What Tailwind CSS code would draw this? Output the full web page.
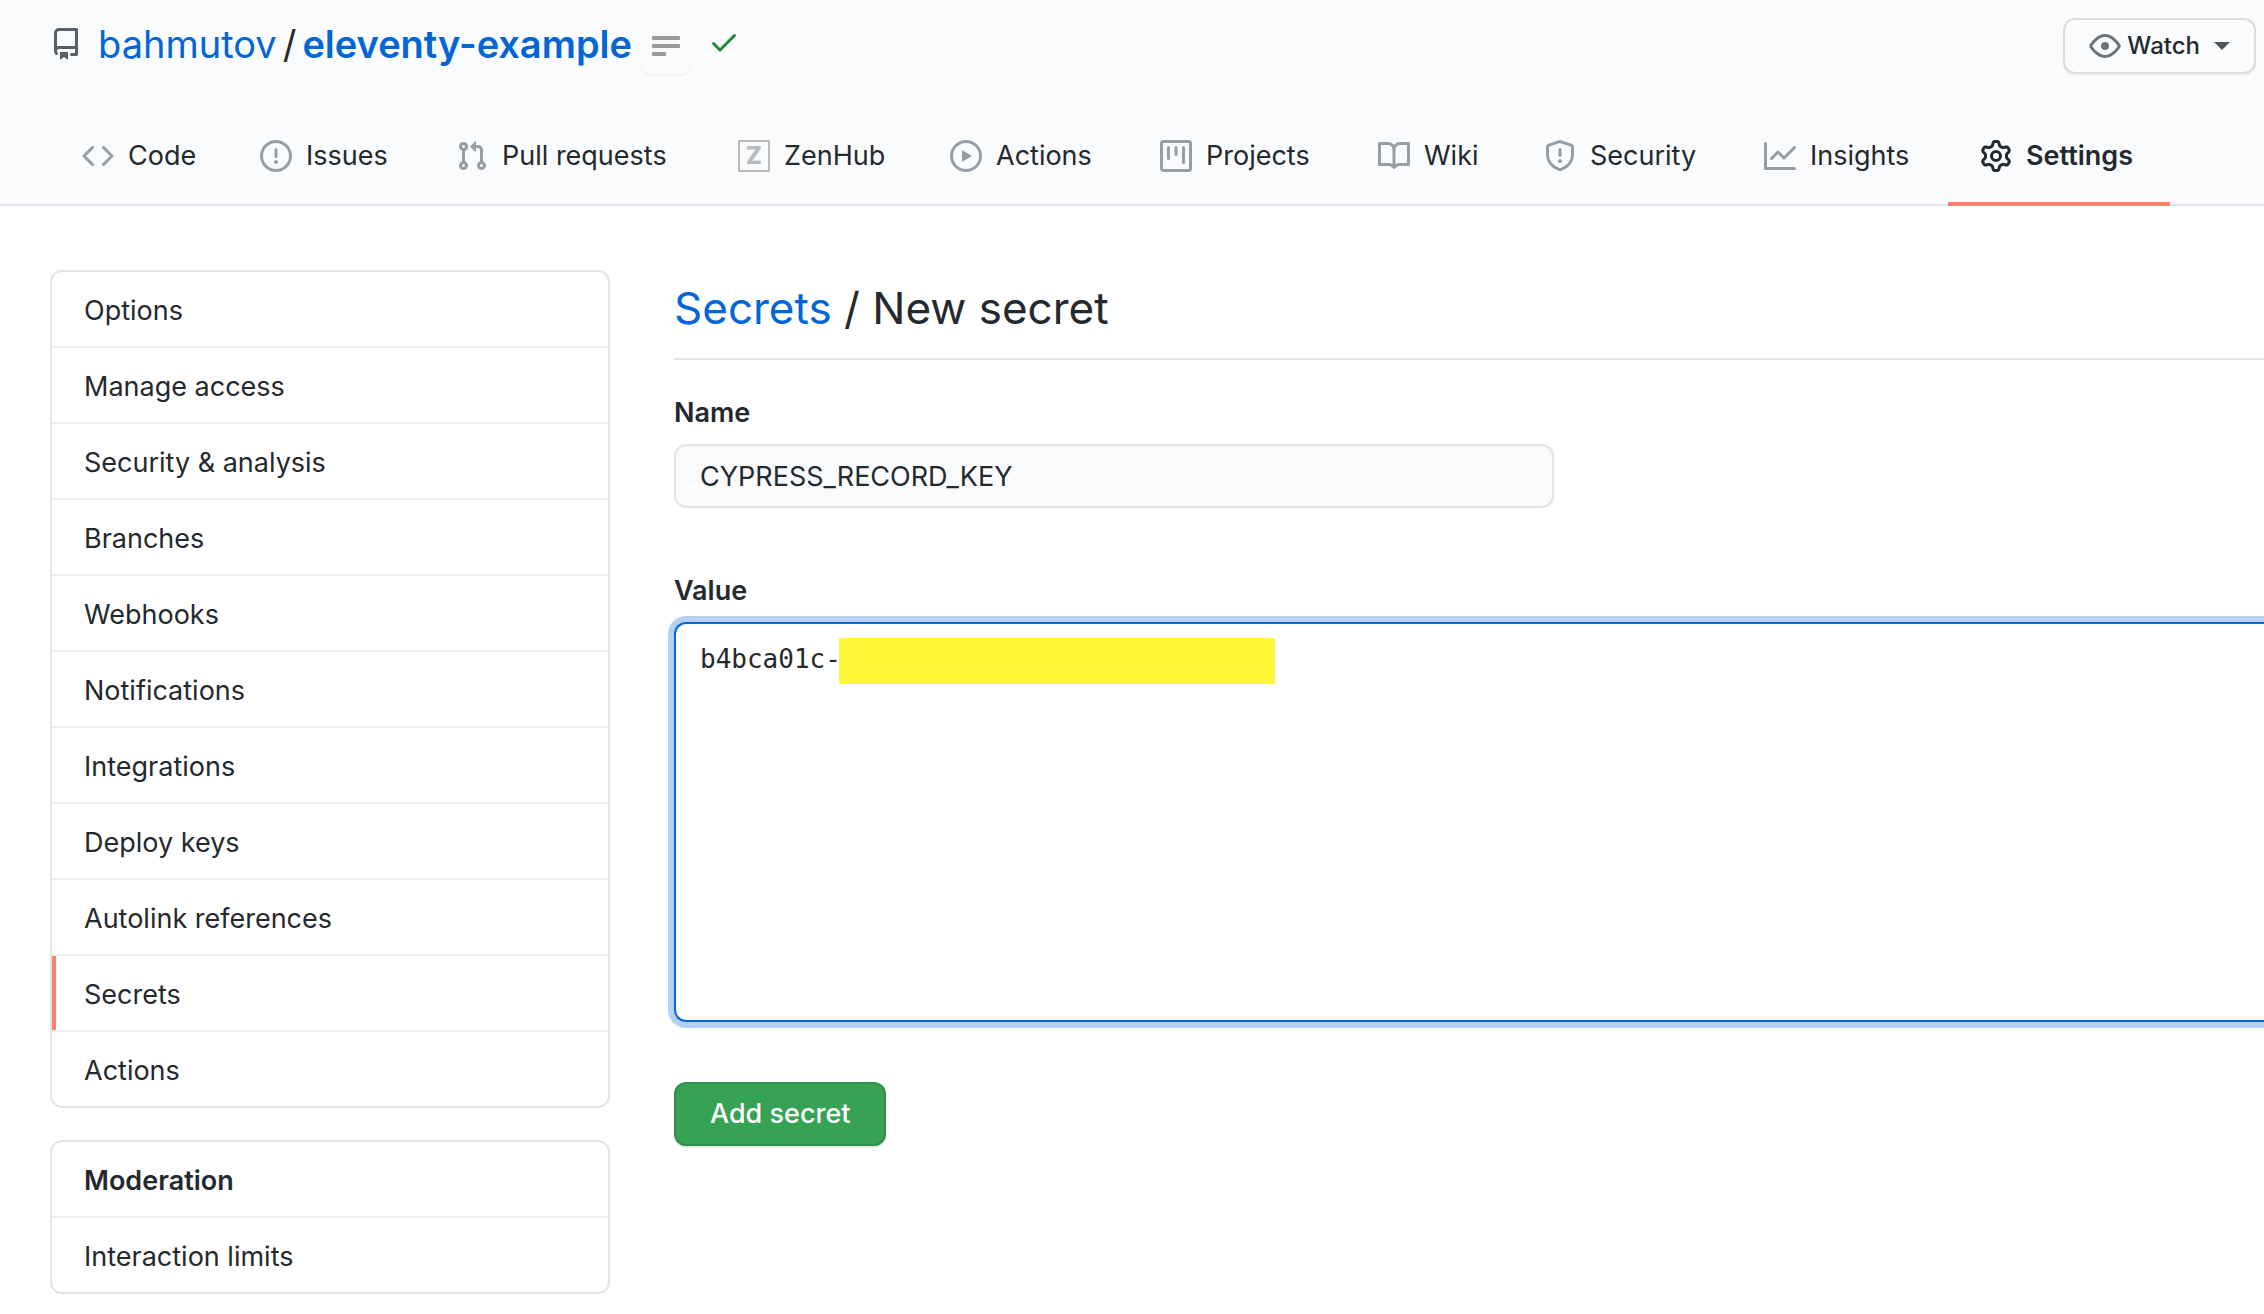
<!DOCTYPE html>
<html lang="en">
<head>
<meta charset="utf-8">
<title>New secret · bahmutov/eleventy-example</title>
<script src="https://cdn.jsdelivr.net/npm/@tailwindcss/browser@4"></script>
</head>
<body class="min-h-screen overflow-x-hidden bg-white font-['Inter',sans-serif] text-[27px] leading-[42px] text-[#24292e]">
<header class="border-b-2 border-[#e1e4e8] bg-[#fafbfc]">
  <div class="flex h-[92px] items-center justify-between pr-2 pl-[50px]">
    <div class="flex items-center">
      <svg class="mb-1 size-8 shrink-0 fill-[#586069]" viewBox="0 0 16 16" aria-hidden="true"><path fill-rule="evenodd" d="M2 2.5A2.5 2.5 0 014.5 0h8.75a.75.75 0 01.75.75v12.5a.75.75 0 01-.75.75h-2.5a.75.75 0 110-1.5h1.75v-2h-8a1 1 0 00-.714 1.7.75.75 0 01-1.072 1.05A2.495 2.495 0 012 11.5v-9zm10.5-1V9h-8c-.356 0-.694.074-1 .208V2.5a1 1 0 011-1h8zM5 12.25v3.25a.25.25 0 00.4.2l1.45-1.087a.25.25 0 01.3 0L8.6 15.7a.25.25 0 00.4-.2v-3.25a.25.25 0 00-.25-.25h-3.5a.25.25 0 00-.25.25z"/></svg>
      <h1 class="ml-4 flex items-center gap-1.5 pb-1 text-[38px] leading-[60px]">
        <a href="#" class="text-[#0366d6]">bahmutov</a>
        <span>/</span>
        <a href="#" class="font-semibold text-[#0366d6]">eleventy-example</a>
      </h1>
      <button type="button" aria-label="Description" class="ml-2 flex h-14 w-[52px] items-center justify-center rounded-xl shadow-[0_2px_0_rgba(27,31,35,0.04)]">
        <svg class="h-5 w-7 fill-[#999]" viewBox="0 0 28 20" aria-hidden="true"><rect width="28" height="4" rx="1"/><rect y="8" width="28" height="4" rx="1"/><rect y="16" width="14" height="4" rx="1"/></svg>
      </button>
      <svg class="mb-2 ml-4 size-8 fill-[#22863a]" viewBox="0 0 16 16" role="img" aria-label="Checks passed"><path fill-rule="evenodd" d="M13.78 4.22a.75.75 0 010 1.06l-7.25 7.25a.75.75 0 01-1.06 0L2.22 9.28a.75.75 0 011.06-1.06L6 10.94l6.72-6.72a.75.75 0 011.06 0z"/></svg>
    </div>
    <button type="button" class="flex h-14 items-center rounded-xl border-2 border-[#dadcde] bg-[#fafbfc] px-6 text-2xl leading-10 font-medium shadow-[0_2px_0_rgba(27,31,35,0.04)]">
      <svg class="mr-1.5 size-8 fill-[#6a737d]" viewBox="0 0 16 16" aria-hidden="true"><path fill-rule="evenodd" d="M1.679 7.932c.412-.621 1.242-1.75 2.366-2.717C5.175 4.242 6.527 3.5 8 3.5c1.473 0 2.824.742 3.955 1.715 1.124.967 1.954 2.096 2.366 2.717a.119.119 0 010 .136c-.412.621-1.242 1.75-2.366 2.717C10.825 11.758 9.473 12.5 8 12.5c-1.473 0-2.824-.742-3.955-1.715C2.92 9.818 2.09 8.69 1.679 8.068a.119.119 0 010-.136zM8 2c-1.981 0-3.67.992-4.933 2.078C1.797 5.169.88 6.423.43 7.1a1.619 1.619 0 000 1.798c.45.678 1.367 1.932 2.637 3.024C4.329 13.008 6.019 14 8 14c1.981 0 3.67-.992 4.933-2.078 1.27-1.091 2.187-2.345 2.637-3.023a1.619 1.619 0 000-1.798c-.45-.678-1.367-1.932-2.637-3.023C11.671 2.992 9.981 2 8 2zm0 8a2 2 0 100-4 2 2 0 000 4z"/></svg>
      Watch
      <span class="ml-[14px] border-x-8 border-t-8 border-x-transparent border-t-[#50565c]"></span>
    </button>
  </div>
  <nav aria-label="Repository" class="-mb-0.5 flex h-[114px] items-stretch pt-[18px] pl-[50px]">
    <a href="#" class="flex min-w-[178px] items-center gap-[14px] border-b-4 border-transparent pl-8"><svg class="size-8 shrink-0 fill-[#959da5]" viewBox="0 0 16 16" aria-hidden="true"><path fill-rule="evenodd" d="M4.72 3.22a.75.75 0 011.06 1.06L2.06 8l3.72 3.72a.75.75 0 11-1.06 1.06L.47 8.53a.75.75 0 010-1.06l4.25-4.25zm6.56 0a.75.75 0 10-1.06 1.06L13.94 8l-3.72 3.72a.75.75 0 101.06 1.06l4.25-4.25a.75.75 0 000-1.06l-4.25-4.25z"/></svg>Code</a>
    <a href="#" class="flex min-w-[196px] items-center gap-[14px] border-b-4 border-transparent pl-8"><svg class="size-8 shrink-0 fill-[#959da5]" viewBox="0 0 16 16" aria-hidden="true"><path fill-rule="evenodd" d="M8 1.5a6.5 6.5 0 100 13 6.5 6.5 0 000-13zM0 8a8 8 0 1116 0A8 8 0 010 8zm9 3a1 1 0 11-2 0 1 1 0 012 0zm-.25-6.25a.75.75 0 00-1.5 0v3.5a.75.75 0 001.5 0v-3.5z"/></svg>Issues</a>
    <a href="#" class="flex min-w-[282px] items-center gap-[14px] border-b-4 border-transparent pl-8"><svg class="size-8 shrink-0 fill-[#959da5]" viewBox="0 0 16 16" aria-hidden="true"><path fill-rule="evenodd" d="M7.177 3.073L9.573.677A.25.25 0 0110 .854v4.792a.25.25 0 01-.427.177L7.177 3.427a.25.25 0 010-.354zM3.75 2.5a.75.75 0 100 1.5.75.75 0 000-1.5zm-2.25.75a2.25 2.25 0 113 2.122v5.256a2.251 2.251 0 11-1.5 0V5.372A2.25 2.25 0 011.5 3.25zM11 2.5h-1V4h1a1 1 0 011 1v5.628a2.251 2.251 0 101.5 0V5A2.5 2.5 0 0011 2.5zm1 10.25a.75.75 0 111.5 0 .75.75 0 01-1.5 0zM3.75 12a.75.75 0 100 1.5.75.75 0 000-1.5z"/></svg>Pull requests</a>
    <a href="#" class="flex min-w-[212px] items-center gap-[14px] border-b-4 border-transparent pl-8"><span class="flex size-8 shrink-0 items-center justify-center border-2 border-[#b8babc] text-2xl leading-7 font-extrabold text-[#b8babc]" aria-hidden="true">Z</span>ZenHub</a>
    <a href="#" class="flex min-w-[210px] items-center gap-[14px] border-b-4 border-transparent pl-8"><svg class="size-8 shrink-0 fill-[#959da5]" viewBox="0 0 16 16" aria-hidden="true"><path fill-rule="evenodd" d="M1.5 8a6.5 6.5 0 1113 0 6.5 6.5 0 01-13 0zM8 0a8 8 0 100 16A8 8 0 008 0zM6.379 5.227A.25.25 0 006 5.442v5.117a.25.25 0 00.379.214l4.264-2.559a.25.25 0 000-.428L6.379 5.227z"/></svg>Actions</a>
    <a href="#" class="flex min-w-[218px] items-center gap-[14px] border-b-4 border-transparent pl-8"><svg class="size-8 shrink-0 fill-[#959da5]" viewBox="0 0 16 16" aria-hidden="true"><path fill-rule="evenodd" d="M1.75 0A1.75 1.75 0 000 1.75v12.5C0 15.216.784 16 1.75 16h12.5A1.75 1.75 0 0016 14.25V1.75A1.75 1.75 0 0014.25 0H1.75zM1.5 1.75a.25.25 0 01.25-.25h12.5a.25.25 0 01.25.25v12.5a.25.25 0 01-.25.25H1.75a.25.25 0 01-.25-.25V1.75zM11.75 3a.75.75 0 00-.75.75v7.5a.75.75 0 001.5 0v-7.5a.75.75 0 00-.75-.75zm-8.25.75a.75.75 0 011.5 0v5.5a.75.75 0 01-1.5 0v-5.5zM8 3a.75.75 0 00-.75.75v3.5a.75.75 0 001.5 0v-3.5A.75.75 0 008 3z"/></svg>Projects</a>
    <a href="#" class="flex min-w-[166px] items-center gap-[14px] border-b-4 border-transparent pl-8"><svg class="size-8 shrink-0 fill-[#959da5]" viewBox="0 0 16 16" aria-hidden="true"><path fill-rule="evenodd" d="M0 1.75A.75.75 0 01.75 1h4.253c1.227 0 2.317.59 3 1.501A3.744 3.744 0 0111.006 1h4.245a.75.75 0 01.75.75v10.5a.75.75 0 01-.75.75h-4.507a2.25 2.25 0 00-1.591.659l-.622.621a.75.75 0 01-1.06 0l-.622-.621A2.25 2.25 0 005.258 13H.75a.75.75 0 01-.75-.75V1.75zm8.755 3a2.25 2.25 0 012.25-2.25H14.5v9h-3.757c-.71 0-1.4.201-1.992.572l.004-7.322zm-1.504 7.324l.004-5.073-.002-2.253A2.25 2.25 0 005.003 2.5H1.5v9h3.757a3.75 3.75 0 011.994.574z"/></svg>Wiki</a>
    <a href="#" class="flex min-w-[220px] items-center gap-[14px] border-b-4 border-transparent pl-8"><svg class="size-8 shrink-0 fill-[#959da5]" viewBox="0 0 16 16" aria-hidden="true"><path fill-rule="evenodd" d="M7.467.133a1.75 1.75 0 011.066 0l5.25 1.68A1.75 1.75 0 0115 3.48V7c0 1.566-.32 3.182-1.303 4.682-.983 1.498-2.585 2.813-5.032 3.855a1.7 1.7 0 01-1.33 0c-2.447-1.042-4.049-2.357-5.032-3.855C1.32 10.182 1 8.566 1 7V3.48a1.75 1.75 0 011.217-1.667l5.25-1.68zm.61 1.429a.25.25 0 00-.153 0l-5.25 1.68a.25.25 0 00-.174.238V7c0 1.358.275 2.666 1.057 3.86.784 1.194 2.121 2.34 4.366 3.297a.2.2 0 00.154 0c2.245-.956 3.582-2.104 4.366-3.298C13.225 9.666 13.5 8.36 13.5 7V3.48a.25.25 0 00-.174-.237l-5.25-1.68zM9 10.5a1 1 0 11-2 0 1 1 0 012 0zm-.25-5.75a.75.75 0 10-1.5 0v3a.75.75 0 001.5 0v-3z"/></svg>Security</a>
    <a href="#" class="flex min-w-[216px] items-center gap-[14px] border-b-4 border-transparent pl-8"><svg class="size-8 shrink-0 fill-[#959da5]" viewBox="0 0 16 16" aria-hidden="true"><path fill-rule="evenodd" d="M1.5 1.75a.75.75 0 00-1.5 0v12.5c0 .414.336.75.75.75h14.5a.75.75 0 000-1.5H1.5V1.75zm14.28 2.53a.75.75 0 00-1.06-1.06L10 7.94 7.53 5.47a.75.75 0 00-1.06 0L3.22 8.72a.75.75 0 001.06 1.06L7 7.06l2.47 2.47a.75.75 0 001.06 0l5.25-5.25z"/></svg>Insights</a>
    <a href="#" aria-current="page" class="flex min-w-[222px] items-center gap-[14px] border-b-4 border-[#f9826c] pl-8 font-semibold"><svg class="size-8 shrink-0 fill-[#24292e]" viewBox="0 0 16 16" aria-hidden="true"><path fill-rule="evenodd" d="M7.429 1.525a6.593 6.593 0 011.142 0c.036.003.108.036.137.146l.289 1.105c.147.56.55.967.997 1.189.174.086.341.183.501.29.417.278.97.423 1.53.27l1.102-.303c.11-.03.175.016.195.046.219.31.41.641.573.989.014.031.022.11-.059.19l-.815.806c-.411.406-.562.957-.53 1.456a4.588 4.588 0 010 .582c-.032.499.119 1.05.53 1.456l.815.806c.08.08.073.159.059.19a6.494 6.494 0 01-.573.99c-.02.029-.086.074-.195.045l-1.103-.303c-.559-.153-1.112-.008-1.529.27-.16.107-.327.204-.5.29-.449.222-.851.628-.998 1.189l-.289 1.105c-.029.11-.101.143-.137.146a6.613 6.613 0 01-1.142 0c-.036-.003-.108-.037-.137-.146l-.289-1.105c-.147-.56-.55-.967-.997-1.189a4.502 4.502 0 01-.501-.29c-.417-.278-.97-.423-1.53-.27l-1.102.303c-.11.03-.175-.016-.195-.046a6.492 6.492 0 01-.573-.989c-.014-.031-.022-.11.059-.19l.815-.806c.411-.406.562-.957.53-1.456a4.587 4.587 0 010-.582c.032-.499-.119-1.05-.53-1.456l-.815-.806c-.08-.08-.073-.159-.059-.19a6.44 6.44 0 01.573-.99c.02-.029.086-.075.195-.045l1.103.303c.559.153 1.112.008 1.529-.27.16-.107.327-.204.5-.29.449-.222.851-.628.998-1.189l.289-1.105c.029-.11.101-.143.137-.146zM8 0c-.236 0-.47.01-.701.03-.743.065-1.29.615-1.458 1.261l-.29 1.106c-.017.066-.078.158-.211.224a5.994 5.994 0 00-.668.386c-.123.082-.233.09-.3.071L3.27 2.776c-.644-.177-1.392.02-1.82.63a7.977 7.977 0 00-.704 1.217c-.315.675-.111 1.422.363 1.891l.815.806c.05.048.098.147.088.294a6.084 6.084 0 000 .772c.01.147-.038.246-.088.294l-.815.806c-.474.469-.678 1.216-.363 1.891.2.428.436.835.704 1.218.428.609 1.176.806 1.82.63l1.103-.303c.066-.019.176-.011.299.071.213.143.436.272.668.386.133.066.194.158.212.224l.289 1.106c.169.646.715 1.196 1.458 1.26a8.094 8.094 0 001.402 0c.743-.064 1.29-.614 1.458-1.26l.29-1.106c.017-.066.078-.158.211-.224a5.98 5.98 0 00.668-.386c.123-.082.233-.09.3-.071l1.102.302c.644.177 1.392-.02 1.82-.63.268-.382.505-.789.704-1.217.315-.675.111-1.422-.364-1.891l-.814-.806c-.05-.048-.098-.147-.088-.294a6.1 6.1 0 000-.772c-.01-.147.039-.246.088-.294l.814-.806c.475-.469.679-1.216.364-1.891a7.992 7.992 0 00-.704-1.218c-.428-.609-1.176-.806-1.82-.63l-1.103.303c-.066.019-.176.011-.299-.071a5.991 5.991 0 00-.668-.386c-.133-.066-.194-.158-.212-.224L10.16 1.29C9.99.645 9.444.095 8.701.031A8.094 8.094 0 008 0zm1.5 8a1.5 1.5 0 11-3 0 1.5 1.5 0 013 0zM11 8a3 3 0 11-6 0 3 3 0 016 0z"/></svg>Settings</a>
  </nav>
</header>
<div class="flex items-start gap-16 pt-16 pl-[50px]">
  <aside class="flex w-[560px] shrink-0 flex-col gap-8">
    <nav aria-label="Settings" class="divide-y-2 divide-[#eaecef] overflow-hidden rounded-xl border-2 border-[#e1e4e8]">
      <a href="#" class="block px-8 pt-[18px] pb-[14px]">Options</a>
      <a href="#" class="block px-8 pt-[18px] pb-[14px]">Manage access</a>
      <a href="#" class="block px-8 pt-[18px] pb-[14px]">Security &amp; analysis</a>
      <a href="#" class="block px-8 pt-[18px] pb-[14px]">Branches</a>
      <a href="#" class="block px-8 pt-[18px] pb-[14px]">Webhooks</a>
      <a href="#" class="block px-8 pt-[18px] pb-[14px]">Notifications</a>
      <a href="#" class="block px-8 pt-[18px] pb-[14px]">Integrations</a>
      <a href="#" class="block px-8 pt-[18px] pb-[14px]">Deploy keys</a>
      <a href="#" class="block px-8 pt-[18px] pb-[14px]">Autolink references</a>
      <a href="#" aria-current="page" class="block px-8 pt-[18px] pb-[14px] shadow-[inset_4px_0_0_#f9826c]">Secrets</a>
      <a href="#" class="block px-8 pt-[18px] pb-[14px]">Actions</a>
    </nav>
    <nav aria-labelledby="moderation" class="divide-y-2 divide-[#eaecef] overflow-hidden rounded-xl border-2 border-[#e1e4e8]">
      <h3 id="moderation" class="px-8 pt-[18px] pb-[14px] font-semibold">Moderation</h3>
      <a href="#" class="block px-8 pt-[18px] pb-[14px]">Interaction limits</a>
    </nav>
  </aside>
  <main class="min-w-0 flex-1">
    <h2 class="border-b-2 border-[#e1e4e8] pt-0.5 pb-[14px] text-[44px] leading-[72px]"><a href="#" class="text-[#0366d6]">Secrets</a> / New secret</h2>
    <form>
      <label for="secret-name" class="mt-8 block font-semibold">Name</label>
      <input id="secret-name" type="text" value="CYPRESS_RECORD_KEY" class="mt-2.5 block h-16 w-[880px] rounded-xl border-2 border-[#e1e4e8] bg-[#fafbfc] px-6 shadow-[inset_0_2px_0_rgba(225,228,232,0.2)] outline-none">
      <label for="secret-value" class="mt-[62px] block font-semibold">Value</label>
      <div class="relative mt-2.5">
        <textarea id="secret-value" class="block h-[400px] w-full resize-none rounded-l-xl border-2 border-r-0 border-[#0366d6] bg-white px-6 py-[14px] font-['DejaVu_Sans_Mono',monospace] text-[26px] leading-[42px] shadow-[0_0_0_6px_rgba(3,102,214,0.3)] outline-none">b4bca01c-</textarea>
        <div class="absolute top-4 left-[165px] h-[46px] w-[436px] bg-[#fff838]"></div>
      </div>
      <button type="submit" class="mt-[60px] h-16 rounded-xl border-2 border-[#318f4b] bg-[#36a354] px-[34px] font-medium text-white shadow-[0_2px_0_rgba(27,31,35,0.1)]">Add secret</button>
    </form>
  </main>
</div>
</body>
</html>
